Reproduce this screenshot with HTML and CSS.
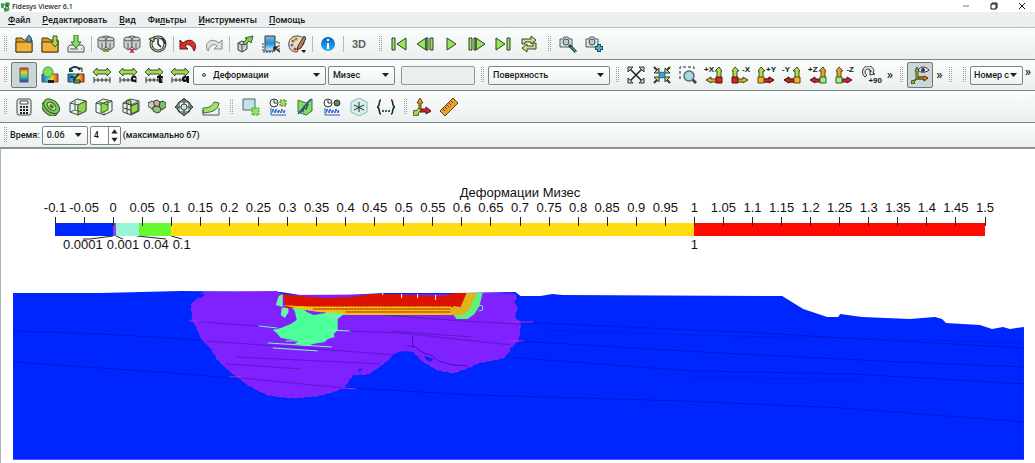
FILE: index.html
```html
<!DOCTYPE html>
<html lang="ru">
<head>
<meta charset="utf-8">
<title>Fidesys Viewer 6.1</title>
<link rel="stylesheet" href="styles.css">
</head>
<body>
<svg class="defs" aria-hidden="true">
  <defs>
    <linearGradient id="rainbow" x1="0" y1="0" x2="0" y2="1"><stop offset="0" stop-color="#e8261c"/><stop offset=".3" stop-color="#f7d21e"/><stop offset=".6" stop-color="#3fc8a0"/><stop offset="1" stop-color="#1a3fd0"/></linearGradient>
    <linearGradient id="rainbowH"><stop offset="0" stop-color="#1668e0"/><stop offset=".35" stop-color="#35d0c0"/><stop offset=".65" stop-color="#f7d21e"/><stop offset="1" stop-color="#e8361c"/></linearGradient>
    <linearGradient id="fade" x1="0" y1="0" x2="0" y2="1"><stop offset="0" stop-color="#9db4c2"/><stop offset=".5" stop-color="#1591e0"/><stop offset="1" stop-color="#e8f4f8"/></linearGradient>
    <linearGradient id="infoFill" x1="0" y1="0" x2="0" y2="1"><stop offset="0" stop-color="#0b5fb4"/><stop offset="1" stop-color="#27b4f4"/></linearGradient>
    <symbol id="folder" viewBox="0 0 18 18"><path d="M1 3h6l2 2h8v12H1z" fill="#d99a24" stroke="#4a3c14"/><path d="M1 7h16v10H1z" fill="#ecb23c" stroke="#4a3c14"/></symbol>
    <symbol id="cylinders" viewBox="0 0 18 18"><g fill="#c9d2d0" stroke="#56605e"><path d="M5 3v10c0 2 8 2 8 0V3"/><ellipse cx="9" cy="3" rx="4" ry="2"/><path d="M1 4v8l4 3 4-3V4"/><ellipse cx="5" cy="4" rx="4" ry="2"/><path d="M9 4v8l4 3 4-3V4"/><ellipse cx="13" cy="4" rx="4" ry="2"/><path d="M5 8v6M13 8v6"/></g></symbol>
    <symbol id="range" viewBox="0 0 18 18"><path d="M0 6l4-4v2h10V2l4 4-4 4V8H4v2z" fill="#a5d65a" stroke="#3c5420"/><path d="M1 11v6M17 11v6M1 14h16M5 12v4M9 12v4M13 12v4" stroke="#333" fill="none"/></symbol>
    <symbol id="cube" viewBox="0 0 18 18"><path d="M1 5l7-4 9 2v10l-8 4-8-3z" fill="#e9f3ee" stroke="#3d4a44"/><path d="M1 5l8 2 8-4M9 7v10" stroke="#3d4a44" fill="none"/></symbol>
    <symbol id="axes" viewBox="0 0 18 18"><path d="M12 16V5h-2l4-4 3 4h-1v11z" fill="#b0dc50" stroke="#3d4a20"/><path d="M14 13H6v-2l-5 3 5 3v-1h8z" fill="#c8b830" stroke="#46401c"/></symbol>
    <symbol id="first" viewBox="0 0 18 18"><path d="M2 3h3v12H2zM16 3v12L7 9z" fill="#96e65a" stroke="#2e3e28"/></symbol>
    <symbol id="prev" viewBox="0 0 18 18"><path d="M10 3v12L1 9zM10 3h2v12h-2zM14 3h3v12h-3z" fill="#96e65a" stroke="#2e3e28"/></symbol>
    <symbol id="scope" viewBox="0 0 18 18"><circle cx="5" cy="5" r="4" fill="#f4f7f6" stroke="#333"/><path d="M5 2v3h3" fill="none" stroke="#333"/><path d="M2 10v7h15M3 15l1-4 2 4 1-4 2 4 1-3 2 3 1-4 2 4 1-3" fill="none" stroke="#285cc8"/></symbol>
  </defs>
</svg>

<div class="window">
  <header class="titlebar">
    <svg class="logo" viewBox="0 0 12 12"><path d="M1 2l4 1-1 5-3-1zM6 1l5 1-1 4-4 1zM4 8l5 0 1 3-5 1z" fill="#38a048"/><path d="M5 3l2 3-2 3M7 3l3 6" stroke="#174e2a" fill="none"/></svg>
    <span class="title">Fidesys Viewer 6.1</span>
    <div class="controls">
      <button aria-label="Свернуть"><svg viewBox="0 0 10 10"><path d="M2 5h6" stroke="#777"/></svg></button>
      <button aria-label="Восстановить"><svg viewBox="0 0 10 10"><path d="M3 3V2h5v5H7M2 3h5v5H2z" fill="none" stroke="#111"/></svg></button>
      <button aria-label="Закрыть"><svg viewBox="0 0 10 10"><path d="M2 2l6 6M8 2L2 8" stroke="#111"/></svg></button>
    </div>
  </header>

  <nav class="menubar">
    <button><u>Ф</u>айл</button><button><u>Р</u>едактировать</button><button><u>В</u>ид</button><button>Фи<u>л</u>ьтры</button><button><u>И</u>нструменты</button><button><u>П</u>омощь</button>
  </nav>

  <div class="toolbar main">
    <span class="handle"></span>
    <div class="group">
      <button class="tool" aria-label="Открыть"><svg viewBox="0 0 18 18"><use href="#folder"/><path d="M14 0l3 4h-1v3h-4V4h-1z" fill="#5a9ab8" stroke="#2c4e60"/></svg></button>
      <button class="tool" aria-label="Загрузить"><svg viewBox="0 0 18 18"><use href="#folder"/><path d="M12 1h4v6h2l-4 5-4-5h2z" fill="#a5dc50" stroke="#3c5420"/></svg></button>
      <button class="tool" aria-label="Сохранить"><svg viewBox="0 0 18 18"><path d="M1 12l2-2h12l2 2v5H1z" fill="#e8eeee" stroke="#48504e"/><path d="M3 14h8M14 14h1" stroke="#48504e"/><path d="M7 0h4v7h3l-5 6-5-6h3z" fill="#8ede58" stroke="#35702a"/></svg></button>
    </div>
    <span class="sep"></span>
    <div class="group">
      <button class="tool" aria-label="Подключить"><svg viewBox="0 0 18 18"><use href="#cylinders"/><path d="M6 16h6" stroke="#78a828" stroke-width="2"/></svg></button>
      <button class="tool" aria-label="Отключить"><svg viewBox="0 0 18 18"><use href="#cylinders"/><path d="M7 14l4 4M11 14l-4 4" stroke="#d0283c" stroke-width="1.5"/></svg></button>
      <button class="tool" aria-label="История"><svg viewBox="0 0 18 18"><circle cx="9" cy="9" r="7" fill="none" stroke="#333a30" stroke-width="3"/><circle cx="9" cy="9" r="7" fill="none" stroke="#d4dfa8" stroke-dasharray="37 7"/><path d="M9 4v5l3 3" fill="none" stroke="#222" stroke-width="1.5"/><path d="M0 4l5-2v5z" fill="#c6d890" stroke="#333"/></svg></button>
    </div>
    <span class="sep"></span>
    <div class="group">
      <button class="tool" aria-label="Отменить"><svg viewBox="0 0 18 18"><path d="M1 5v9h8l-3-3c3-3 7-1 9 5 5-7-3-15-11-8z" fill="#d6302a" stroke="#641412"/></svg></button>
      <button class="tool" aria-label="Повторить"><svg viewBox="0 0 18 18"><path d="M17 5v9H9l3-3c-3-3-7-1-9 5-5-7 3-15 11-8z" fill="#dde3e2" stroke="#808a88"/></svg></button>
    </div>
    <span class="sep wide"></span>
    <div class="group">
      <button class="tool" aria-label="Куб"><svg viewBox="0 0 18 18"><path d="M2 8l4-2 5 2v6l-5 3-4-2z" fill="#c9d2d0" stroke="#3c4442"/><path d="M2 8l4 2 5-2M6 10v7" fill="none" stroke="#3c4442"/><path d="M7 8l4-4-2-1 8-2-2 7-2-2-4 4z" fill="#80d050" stroke="#34602a"/></svg></button>
      <button class="tool" aria-label="Выбор области"><svg viewBox="0 0 18 18"><path d="M3 1h10v15H3z" fill="url(#fade)" stroke="#303c44"/><path d="M1 17h10M17 7v8M1 8v9M14 7h3" fill="none" stroke="#333" stroke-dasharray="2 1"/><path d="M12 12l6 5M12 12v4M12 12h4" stroke="#222" stroke-width="1.5"/></svg></button>
      <button class="tool" aria-label="Палитра"><svg viewBox="0 0 18 18"><path d="M9 1C3 1 0 6 1 11s5 6 8 6c2-1-1-4 1-5s6 0 6-5-4-6-7-6z" fill="#ecd9c4" stroke="#4c3a2c"/><circle cx="5" cy="6" r="1.5" fill="#d8402c"/><circle cx="4" cy="10" r="1.5" fill="#2c80d0"/><circle cx="8" cy="4" r="1.5" fill="#48a838"/><circle cx="7" cy="14" r="1.5" fill="#d8302c"/><path d="M16 1l-6 10-1 4 4-2 5-10z" fill="#b08858" stroke="#3c2c20"/><path d="M13 15h5l-2 3z" fill="#111"/></svg></button>
    </div>
    <span class="sep wide"></span>
    <button class="tool" aria-label="Справка"><svg viewBox="0 0 18 18"><circle cx="9" cy="9" r="7" fill="url(#infoFill)"/><path d="M9 4v2M9 8v6" stroke="#fff" stroke-width="2"/></svg></button>
    <span class="sep wide"></span>
    <button class="tool text3d">3D</button>
    <span class="handle next"></span>
    <div class="group">
      <button class="tool" aria-label="Первый кадр"><svg viewBox="0 0 18 18"><use href="#first"/></svg></button>
      <button class="tool" aria-label="Предыдущий кадр"><svg viewBox="0 0 18 18"><use href="#prev"/></svg></button>
      <button class="tool" aria-label="Воспроизвести"><svg viewBox="0 0 18 18"><path d="M5 3v12l9-6z" fill="#96e65a" stroke="#2e3e28"/></svg></button>
      <button class="tool" aria-label="Следующий кадр"><svg viewBox="0 0 18 18"><use href="#prev" transform="matrix(-1 0 0 1 18 0)"/></svg></button>
      <button class="tool" aria-label="Последний кадр"><svg viewBox="0 0 18 18"><use href="#first" transform="matrix(-1 0 0 1 18 0)"/></svg></button>
      <button class="tool" aria-label="Повтор"><svg viewBox="0 0 18 18"><path d="M2 9V4h9V1l5 4-5 4V7H5v2zM16 8v6H7v3l-5-4 5-4v2h6V8z" fill="#c4e488" stroke="#39432a"/></svg></button>
    </div>
    <span class="handle near"></span>
    <div class="group">
      <button class="tool" aria-label="Поиск камеры"><svg viewBox="0 0 18 18"><path d="M1 4h3l1-2h4l1 2h3v8H1z" fill="#dde4e4" stroke="#505a5c"/><circle cx="7" cy="7" r="3" fill="#b4ccd4" stroke="#405054"/><path d="M10 10l7 7" stroke="#303c40" stroke-width="3"/><path d="M12 12l5 5" stroke="#48b4c8"/></svg></button>
      <button class="tool" aria-label="Добавить камеру"><svg viewBox="0 0 18 18"><path d="M1 4h3l1-2h4l1 2h3v8H1z" fill="#dde4e4" stroke="#505a5c"/><circle cx="7" cy="7" r="3" fill="#b4ccd4" stroke="#405054"/><path d="M14 9v8M10 13h8" stroke="#24505e" stroke-width="4"/><path d="M14 10v6M11 13h6" stroke="#48b4c8" stroke-width="2"/></svg></button>
    </div>
  </div>

  <div class="toolbar display">
    <span class="handle"></span>
    <div class="group">
      <button class="tool pressed" aria-label="Легенда"><svg viewBox="0 0 18 18"><path d="M5 2h8v14H5z" fill="url(#rainbow)" stroke="#58584c"/></svg></button>
      <button class="tool" aria-label="Цвет"><svg viewBox="0 0 18 18"><path d="M1 8h16v8H1z" fill="url(#rainbowH)" stroke="#555"/><path d="M7 14h6v3H7z" fill="#222"/><circle cx="7" cy="6" r="5" fill="#80e064" stroke="#58904a"/></svg></button>
      <button class="tool" aria-label="Шкала"><svg viewBox="0 0 18 18"><path d="M1 8h16v8H1z" fill="url(#rainbowH)" stroke="#444"/><path d="M3 4c2-4 8-4 10 0M3 2v3h3M6 14l6-6M3 11h4" fill="none" stroke="#1e3c50" stroke-width="2"/><path d="M12 2h3v4M7 14h6v3H7z" fill="none" stroke="#222"/></svg></button>
      <button class="tool" aria-label="Диапазон"><svg viewBox="0 0 18 18"><use href="#range"/></svg></button>
      <button class="tool" aria-label="Диапазон c"><svg viewBox="0 0 18 18"><use href="#range"/><path d="M17 11c-5-2-6 5 0 4" fill="none" stroke="#111" stroke-width="2"/></svg></button>
      <button class="tool" aria-label="Диапазон t"><svg viewBox="0 0 18 18"><use href="#range"/><path d="M15 9v7h2M12 11h6" fill="none" stroke="#111" stroke-width="2"/></svg></button>
      <button class="tool" aria-label="Диапазон a"><svg viewBox="0 0 18 18"><use href="#range"/><circle cx="14" cy="13" r="2" fill="none" stroke="#111" stroke-width="2"/><path d="M17 10v7" stroke="#111" stroke-width="2"/></svg></button>
    </div>
    <span class="combo field"><i class="point"></i><select aria-label="Поле"><option>Деформации</option></select></span>
    <span class="combo component"><select aria-label="Компонента"><option>Мизес</option></select></span>
    <input class="blank" aria-label="Значение" disabled>
    <span class="handle"></span>
    <span class="combo surface"><select aria-label="Представление"><option>Поверхность</option></select></span>
    <span class="handle next"></span>
    <div class="group">
      <button class="tool" aria-label="Показать всё"><svg viewBox="0 0 18 18"><path d="M3 3l12 12M15 3L3 15" stroke="#222" stroke-width="1.5"/><path d="M1 1h5L1 6zM17 1h-5l5 5zM1 17h5l-5-5zM17 17h-5l5-5z" fill="#c8dcb0" stroke="#333"/></svg></button>
      <button class="tool" aria-label="К данным"><svg viewBox="0 0 18 18"><path d="M1 1l5 5M17 1l-5 5M1 17l5-5M17 17l-5-5" stroke="#333" stroke-width="2"/><path d="M6 7H1l5-5zM12 7h5l-5-5zM6 11H1l5 5zM12 11h5l-5 5z" fill="#c4dc70" stroke="#333"/><circle cx="9" cy="9" r="3" fill="#30a8e0" stroke="#226080"/></svg></button>
      <button class="tool" aria-label="Увеличить область"><svg viewBox="0 0 18 18"><path d="M1 13V1h14v3" fill="none" stroke="#222" stroke-dasharray="3 2"/><path d="M13 13l4 4" stroke="#444" stroke-width="3"/><circle cx="10" cy="10" r="5" fill="#a8d8e0" stroke="#5a6c70" stroke-width="1.5"/></svg></button>
      <button class="tool view" aria-label="+X"><svg viewBox="0 0 18 18"><use href="#axes"/><path d="M11 11h6v6h-6z" fill="#e02020" stroke="#501414"/></svg><b>+X</b></button>
      <button class="tool view right" aria-label="-X"><svg viewBox="0 0 18 18"><g transform="matrix(-1 0 0 1 18 0)"><use href="#axes"/><path d="M11 11h6v6h-6z" fill="#e02020" stroke="#501414"/></g></svg><b>-X</b></button>
      <button class="tool view right" aria-label="+Y"><svg viewBox="0 0 18 18"><g transform="matrix(-1 0 0 1 18 0)"><use href="#axes"/><path d="M14 13H6v-2l-5 3 5 3v-1h8z" fill="#d02428" stroke="#501414"/><path d="M11 11h6v6h-6z" fill="#f0b428" stroke="#5c4414"/></g></svg><b>+Y</b></button>
      <button class="tool view" aria-label="-Y"><svg viewBox="0 0 18 18"><use href="#axes"/><path d="M14 13H6v-2l-5 3 5 3v-1h8z" fill="#d02428" stroke="#501414"/><path d="M11 11h6v6h-6z" fill="#f0b428" stroke="#5c4414"/></svg><b>-Y</b></button>
      <button class="tool view" aria-label="+Z"><svg viewBox="0 0 18 18"><path d="M12 16V5h-2l4-4 3 4h-1v11z" fill="#e8a030" stroke="#5c4414"/><path d="M14 13H6v-2l-5 3 5 3v-1h8z" fill="#d02428" stroke="#501414"/><path d="M11 11h6v6h-6z" fill="#a0f080" stroke="#2c5c24"/></svg><b>+Z</b></button>
      <button class="tool view right" aria-label="-Z"><svg viewBox="0 0 18 18"><g transform="matrix(-1 0 0 1 18 0)"><path d="M12 16V5h-2l4-4 3 4h-1v11z" fill="#e8a030" stroke="#5c4414"/><path d="M14 13H6v-2l-5 3 5 3v-1h8z" fill="#d02428" stroke="#501414"/><path d="M11 11h6v6h-6z" fill="#a0f080" stroke="#2c5c24"/></g></svg><b>-Z</b></button>
      <button class="tool view low" aria-label="+90"><svg viewBox="0 0 18 18"><path d="M4 11C-1 7 2 0 7 0s7 4 5 7l2 1-5 1V4l1 2c0-4-6-4-6 0 0 2 1 2 2 3z" fill="#dfe6e2" stroke="#333"/></svg><b>+90</b></button>
    </div>
    <button class="more">»</button>
    <span class="handle"></span>
    <button class="tool pressed orient" aria-label="Оси ориентации"><svg viewBox="0 0 18 18"><path d="M5 13V5H4l2-4 2 4H7v6h6v-1l4 2-4 3v-2H6l-3 3 1 1-4 1 1-4 1 1z" fill="#90c838" stroke="#3c5420"/><path d="M7 11h6v-1l4 2-4 3v-2H7z" fill="#e08020" stroke="#643c14"/><path d="M7 4c3-4 7-4 11 0-4 3-8 3-11 0z" fill="#eef" stroke="#333"/><circle cx="12" cy="4" r="2" fill="#334"/></svg></button>
    <button class="more">»</button>
    <span class="handle"></span>
    <span class="handle next"></span>
    <span class="combo number"><select aria-label="Номер"><option>Номер с</option></select></span>
    <button class="more last">»</button>
  </div>

  <div class="toolbar filters">
    <span class="handle"></span>
    <div class="group eight">
      <button class="tool" aria-label="Калькулятор"><svg viewBox="0 0 18 18"><rect x="2" y="1" width="14" height="16" rx="2" fill="#e8eeec" stroke="#404846"/><path d="M5 3h8v3H5z" fill="#fff" stroke="#404846"/><path d="M5 9h8M5 12h8M5 15h8" stroke="#222" stroke-width="2" stroke-dasharray="2 1"/></svg></button>
      <button class="tool" aria-label="Контур"><svg viewBox="0 0 18 18"><g transform="rotate(40 9 9)" fill="#7fc850" stroke="#36582c"><ellipse cx="9" cy="11" rx="9" ry="6"/><ellipse cx="9" cy="8" rx="9" ry="6"/><ellipse cx="9" cy="8" rx="5" ry="3" fill="#c0e89c"/><ellipse cx="9" cy="8" rx="2" ry="1"/></g></svg></button>
      <button class="tool" aria-label="Отсечение"><svg viewBox="0 0 18 18"><use href="#cube"/><path d="M9 7l8-4v10l-8 4z" fill="#90d848" stroke="#406428"/><path d="M6 3v9l6 2M1 14l5-2" stroke="#56645c" fill="none"/></svg></button>
      <button class="tool" aria-label="Срез"><svg viewBox="0 0 18 18"><use href="#cube"/><path d="M6 6l7-3v9l-7 3z" fill="#90d848" stroke="#406428"/><path d="M4 4l9 3" stroke="#406428"/></svg></button>
      <button class="tool" aria-label="Порог"><svg viewBox="0 0 18 18"><use href="#cube"/><path d="M9 8l7-3v8l-7 3zM5 2l4 1v4L4 5z" fill="#90d848" stroke="#2c4424"/><path d="M5 7v9M2 10l6 2" stroke="#333"/></svg></button>
      <button class="tool" aria-label="Группы"><svg viewBox="0 0 18 18"><g stroke="#38423c"><path d="M0 5l4-2 3 2v4l-3 2-4-3z" fill="#c8ccd0"/><path d="M6 3l3-1 3 2v3l-3 2-3-2z" fill="#e0a0a8"/><path d="M12 4l3-1 3 2v4l-4 3-3-2z" fill="#78c060"/><path d="M5 9l4-1 4 2-1 4-3 1-4-2z" fill="#8cc878"/></g></svg></button>
      <button class="tool" aria-label="Сфера"><svg viewBox="0 0 18 18"><g fill="none" stroke="#384640"><circle cx="9" cy="9" r="7" fill="#e6efea"/><path d="M9 0l9 9-9 9-9-9zM4 4h10v10H4zM9 0v18M0 9h18"/><circle cx="9" cy="9" r="3" fill="#d0e4d4"/></g></svg></button>
      <button class="tool" aria-label="Деформация"><svg viewBox="0 0 18 18"><path d="M1 10c6 0 9-2 11-6l5 1c-1 6-4 9-16 10z" fill="#a0e070" stroke="#486838"/><path d="M1 12v5h16v-7" fill="none" stroke="#48584c"/></svg></button>
    </div>
    <span class="handle gap-left"></span>
    <div class="group six">
      <button class="tool" aria-label="Выделение"><svg viewBox="0 0 18 18"><path d="M1 1h12v11H1z" fill="#bfe3e4" stroke="#4a6668"/><path d="M10 10h7v7h-7z" fill="#8ae858" stroke="#4b9830" stroke-dasharray="2 1"/></svg></button>
      <button class="tool" aria-label="График выделения"><svg viewBox="0 0 18 18"><use href="#scope"/><path d="M11 2h6v6h-6z" fill="#9ed860" stroke="#507830" stroke-dasharray="2 1"/></svg></button>
      <button class="tool" aria-label="График по линии"><svg viewBox="0 0 18 18"><path d="M2 2l8 3 6-4v12l-6 4-8-3z" fill="#7fdc60" stroke="#3d7438"/><path d="M2 16L15 1M4 15l2-3 1 1 1-4 2 2 2-5" stroke="#2c5078" fill="none" stroke-width="1.5"/></svg></button>
      <button class="tool" aria-label="График по времени"><svg viewBox="0 0 18 18"><use href="#scope"/><circle cx="14" cy="5" r="3" fill="#707a78" stroke="#333"/></svg></button>
      <button class="tool" aria-label="Датчик"><svg viewBox="0 0 18 18"><path d="M9 0l8 4v10l-8 4-8-4V4z" fill="#d6eeec" stroke="#8bb8b4"/><path d="M9 4v10M4 7l10 5M14 7L4 12" stroke="#24302e"/></svg></button>
      <button class="tool" aria-label="Программируемый фильтр"><svg viewBox="0 0 18 18"><path d="M4 2C1 2 4 8 0 9c4 1 1 7 4 7M14 2c3 0 0 6 4 7-4 1-1 7-4 7" fill="none" stroke="#222" stroke-width="1.5"/><path d="M5 13h8" stroke="#286878" stroke-width="2" stroke-dasharray="2 1"/></svg></button>
    </div>
    <span class="handle gap-small"></span>
    <div class="group two">
      <button class="tool" aria-label="Оси"><svg viewBox="0 0 18 18"><path d="M6 12V5H4l3-5 3 5H8v7z" fill="#e89a28" stroke="#5c4414"/><path d="M7 11h6V9l5 4-5 3v-2H7z" fill="#d02428" stroke="#501414"/><path d="M8 12l-3 4 1 1-6 1 1-6 2 1 3-3z" fill="#a8d840" stroke="#44601c"/></svg></button>
      <button class="tool" aria-label="Линейка"><svg viewBox="0 0 18 18"><path d="M0 13L13 0l5 5L5 18z" fill="#e8a030" stroke="#5c4414"/><path d="M3 11l2 2M5 9l2 2M7 7l2 2M9 5l2 2M11 3l2 2" stroke="#5c4414"/></svg></button>
    </div>
  </div>

  <div class="toolbar time">
    <span class="handle"></span>
    <label for="time">Время:</label>
    <span class="combo moment"><select id="time"><option>0.06</option></select></span>
    <span class="spin"><input id="step" type="text" value="4" aria-label="Шаг"><svg viewBox="0 0 10 16"><path d="M2 6h6L5 2zM2 10h6l-3 4z" fill="#222"/></svg></span>
    <label for="step">(максимально 67)</label>
  </div>

  <main class="viewport">
    <section class="legend">
      <h1>Деформации Мизес</h1>
      <ol class="ticks">
        <li>-0.1</li><li>-0.05</li><li>0</li><li>0.05</li><li>0.1</li><li>0.15</li><li>0.2</li><li>0.25</li><li>0.3</li><li>0.35</li><li>0.4</li><li>0.45</li><li>0.5</li><li>0.55</li><li>0.6</li><li>0.65</li><li>0.7</li><li>0.75</li><li>0.8</li><li>0.85</li><li>0.9</li><li>0.95</li><li>1</li><li>1.05</li><li>1.1</li><li>1.15</li><li>1.2</li><li>1.25</li><li>1.3</li><li>1.35</li><li>1.4</li><li>1.45</li><li>1.5</li>
      </ol>
      <div class="bar"><i class="c-blue"></i><i class="c-violet"></i><i class="c-aqua"></i><i class="c-green"></i><i class="c-yellow"></i><i class="c-red"></i></div>
      <div class="values">
        <div class="small"><span>0.0001</span><span>0.001</span><span>0.04</span><span>0.1</span></div>
        <span class="one">1</span>
        <svg class="leaders" viewBox="0 0 140 6"><path d="M28 3h7l23-3M68 3L61 0M111 3L82 0M127 3l-11-3" fill="none" stroke="#222"/></svg>
      </div>
    </section>
    <svg class="model" viewBox="0 283 1035 180" role="img" aria-label="Поле деформаций">
      <path fill="#0026ff" d="M12 293L100 293L180 291L280 292L312 297L383 293L460 293L515 292L520 296L540 296L552 294L562 295L782 296L790 301L803 309L827 317L838 317L840 314L862 317L910 319L922 318L935 317L942 319L946 323L980 325L992 329L1003 327L1010 329L1024 327V460H12z"/>
      <g fill="none" stroke="#0019d2">
        <path d="M12 331L100 334L200 340M12 362L170 373L350 388L470 395L680 401L840 408L1024 422M515 322L760 333L860 339L1024 348M515 341L700 352L900 362L1024 367M505 357L690 371L850 374L1024 384"/>
        <path d="M540 330L720 336L850 338L1024 343M690 377L860 380" opacity=".6"/>
      </g>
      <path fill="#8022ff" d="M203 292L276 291L283 295L460 294L480 293L500 293L515 294L516 299L513 302L517 307L514 317L520 323L519 333L518 340L510 348L507 354L503 358L478 363L467 368L453 373L437 370L428 365L420 360L413 352L404 351L398 352L390 358L380 366L368 374L352 375L343 388L330 393L317 396L293 398L278 397L267 395L256 390L247 385L238 378L230 372L222 365L217 360L213 353L210 348L204 343L200 338L198 334L197 330L192 321L190 320L192 317L190 305L195 300L203 296z"/>
      <g fill="none" stroke="#a92be8" stroke-dasharray="4 3">
        <path d="M203 292L195 300L190 305L192 317L198 333L210 348L217 360L230 372L247 385L267 395L293 398L317 396L343 388L352 375L368 374L390 358L404 351M413 352L420 360L437 370L453 373L467 368L478 363L503 358L518 340L520 323L514 317L517 307L513 302L516 294"/>
      </g>
      <path stroke="#c02bd8" d="M228 377h12M342 388l13 1M505 322h28M508 341h15M188 321h8" fill="none"/>
      <g fill="none" stroke="#5b18cc">
        <path d="M200 322L270 327M348 331L400 333L510 345M205 341L330 350L420 357M235 357L380 364M225 364L300 369M384 315L460 321L520 324M390 331L470 337M240 378L342 388"/>
        <path d="M412 336v8l2 4M407 346l8 1 8 6 7 2 8 6 14 4 16 1" stroke="#3f12b8"/>
      </g>
      <path fill="#0026ff" d="M388 360L393 354L402 352L412 352L420 360L408 358L398 361zM424 356l9 3-3 3-5-3zM357 370l5-2-3 4z"/>
      <path fill="#4dff99" d="M272 330L280 328L290 324L296 320L294 311L290 306L302 308L306 312L313 315L325 313L337 317L337 330L333 334L334 337L327 339L324 342L312 344L307 346L294 344L298 341L280 338L276 333z"/>
      <path fill="#6df3a8" d="M281 308l6-1 1 5-4 6-4-3zM275 305l3-9 4-2v13zM325 310h38l-3 4-18 1-5 4-12-2z"/>
      <path fill="none" stroke="#7df5b8" d="M258 326l18 2M325 330l24 1M267 343l64 4M272 348l45 3M285 341h28"/>
      <path fill="#dd1200" d="M282 294L300 296L325 298L350 297L370 294L390 294L412 295L440 296L455 293L468 293L460 308H285z"/>
      <path fill="none" stroke="#fff" d="M401 294v4M417 294v4M435 295v5M382 292v3"/>
      <path fill="#e6c60c" d="M282 305L310 307H452V315H350L336 313L318 312L298 309z"/>
      <path fill="none" stroke="#dd1200" d="M312 309H450M345 312H450"/>
      <path fill="none" stroke="#f3ed2a" stroke-dasharray="2 1" d="M298 307H450"/>
      <path fill="#61f07a" d="M470 293H482L479 306L474 314L467 319H456L452 314L462 310z"/>
      <path fill="#dfb31a" d="M466 293H476L470 307L464 314L454 316L450 312L453 306L460 307z"/>
      <path fill="none" stroke="#61f0b0" d="M478 305l4 1v4l-4 1"/>
    </svg>
  </main>
</div>
</body>
</html>
```
FILE: styles.css
```css
* { box-sizing: border-box; }
body { margin: 0; background: #fff; color: #16191a; font: 500 9px/12px Roboto, "Noto Sans", sans-serif; }
button, select, input { margin: 0; padding: 0; border: 0; background: none; color: inherit; font: inherit; }
.defs { position: absolute; width: 0; height: 0; }
.window { display: flex; flex-direction: column; min-height: 100vh; overflow: hidden; }

.titlebar { display: flex; align-items: center; height: 12px; background: #fff; }
.logo { width: 11px; height: 11px; margin-right: 1px; }
.title { font: 500 7px/11px "Noto Sans", sans-serif; }
.controls { display: flex; gap: 18px; margin-left: auto; padding-right: 8px; }
.controls button { display: flex; width: 10px; height: 10px; }
.menubar { display: flex; gap: 12px; height: 16px; padding-left: 8px; background: #e9f0ef; border-bottom: 1px solid #b9c1c0; }
.menubar u { text-underline-offset: 1px; }

.toolbar { display: flex; align-items: center; min-height: 32px; padding-left: 3px; background: linear-gradient(#fafdfc, #eaf0ef); border-bottom: 1px solid #7d8685; }
.display { min-height: 31px; }
.group { display: flex; flex: none; }
.tool { display: flex; flex: none; align-items: center; justify-content: center; width: 26px; height: 26px; position: relative; }
.tool svg { width: 18px; height: 18px; }
.pressed { background: #cbd6d8; border: 1px solid #6d797b; border-radius: 2px; }
.handle { flex: none; width: 5px; height: 16px; margin-right: 3px; background: conic-gradient(#97a09f 25%, transparent 0) 0 0 / 2px 2px; }
.handle.next { margin-left: 6px; }
.handle.near { margin-left: 5px; }
.sep { flex: none; width: 4px; height: 16px; background: linear-gradient(#b5bdbc, #b5bdbc) center / 1px 100% no-repeat; }
.sep.wide { width: 5px; }
.text3d { color: #596361; font: bold 11px/14px "Liberation Sans", sans-serif; }

.combo { display: flex; align-items: center; flex: none; height: 19px; position: relative; background: linear-gradient(#fff, #eef3f2); border: 1px solid #7b8584; border-radius: 2px; }
.combo select { flex: 1; min-width: 0; height: 17px; padding-left: 4px; appearance: none; }
.combo::after { content: ""; width: 7px; height: 4px; margin-right: 5px; background: #1c2021; clip-path: polygon(0 0, 100% 0, 50% 100%); }
.field { width: 133px; margin-right: 2px; }
.point { width: 4px; height: 4px; margin: 0 3px 0 8px; border: 1px solid #50643c; border-radius: 50%; background: #a4cc60; }
.component { width: 67px; margin-right: 6px; }
.blank { flex: none; width: 74px; height: 19px; margin-right: 5px; background: #eaf0f0; border: 1px solid #8f9998; border-radius: 2px; }
.surface { width: 122px; }
.surface + .handle.next { margin-left: 5px; }
.view b { position: absolute; left: 3px; top: 4px; font: bold 8px/8px "Liberation Sans", sans-serif; }
.view.right b { left: auto; right: 3px; }
.view.low b { left: auto; right: 1px; top: 15px; }
.more { flex: none; width: 14px; font-size: 13px; }
.display .more + .handle { margin-left: 2px; }
.orient + .more { width: 13px; }
.number { width: 53px; }
.number select { padding-left: 3px; }
.more.last { width: 10px; margin-top: -6px; }

.eight { width: 213px; }
.six { width: 162px; }
.two { width: 54px; }
.filters .group .tool { flex: 1; }
.handle.gap-left { margin-left: 5px; }
.handle.gap-small { margin-left: 4px; margin-right: 0; }

.time { min-height: 26px; border-bottom: 2px solid #8d9594; }
.time label { flex: none; }
.time .handle { margin-right: 2px; }
.moment { width: 46px; margin: 0 2px; }
.spin { display: flex; width: 31px; height: 19px; margin-right: 2px; background: #fff; border: 1px solid #7b8584; border-radius: 2px; }
.spin input { flex: 1; min-width: 0; padding-left: 3px; border-right: 1px solid #7b8584; }
.spin svg { width: 11px; height: 17px; }

.viewport { display: flex; flex: 1; flex-direction: column; justify-content: space-between; border-left: 1px solid #b0b6b5; background: #fff; color: #111; font: 13px/15px "Liberation Sans", Arial, sans-serif; }
.legend { margin: 36px 50px 0 54px; }
.legend h1 { margin: 0; font: inherit; text-align: center; }
.ticks { display: flex; justify-content: space-between; margin: 0; padding: 0; list-style: none; }
.ticks li { display: flex; flex-direction: column; align-items: center; width: 0; white-space: nowrap; }
.ticks li::after { content: ""; flex: none; width: 1px; height: 9px; margin: 2px 0 -3px; background: #222; z-index: 1; }
.bar { display: flex; height: 13px; }
.c-blue { width: 6.2%; background: #0026ff; }
.c-violet { width: .4%; background: #8646e0; }
.c-aqua { width: 2.4%; background: #97f5d6; }
.c-green { width: 3.5%; background: #66fa32; }
.c-yellow { width: 56.2%; background: #ffdc12; }
.c-red { flex: 1; background: #ff0a00; }
.values { display: flex; position: relative; }
.small { display: flex; gap: 4px; width: 68.75%; padding: 1px 0 0 8px; }
.one { display: flex; justify-content: center; width: 0; padding-top: 1px; }
.leaders { position: absolute; left: 0; top: 0; width: 140px; height: 6px; }
.model { display: block; width: 100%; height: auto; }
```
